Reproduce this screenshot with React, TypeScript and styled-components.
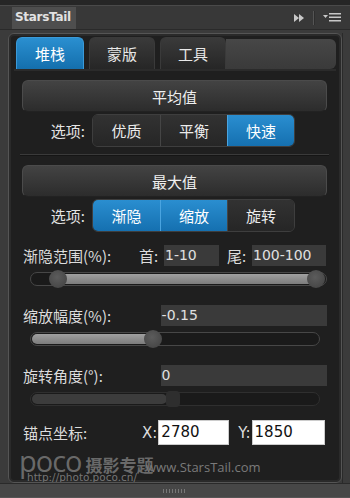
import * as React from 'react';
import styled, { createGlobalStyle, css } from 'styled-components';

const GlobalStyle = createGlobalStyle`
  html, body {
    margin: 0;
    padding: 0;
    background: #3a3a3a;
  }
  * {
    box-sizing: border-box;
  }
`;

const CJK = `"Noto Sans CJK SC", "Noto Sans", sans-serif`;

export default function App() {
  return (
    <Window>
      <GlobalStyle />
      <TopStrip />
      <Header>
        <PanelTitle>StarsTail</PanelTitle>
        <HeaderTools>
          <svg width="11" height="8" viewBox="0 0 11 8">
            <path d="M0 0 L5 4 L0 8 Z M5 0 L10 4 L5 8 Z" fill="#c8c8c8" />
          </svg>
          <HeaderDivider />
          <svg width="18" height="9" viewBox="0 0 18 9">
            <path d="M0 2 L5 2 L2.5 5 Z" fill="#c8c8c8" />
            <rect x="6" y="0" width="12" height="1.5" fill="#c8c8c8" />
            <rect x="6" y="3.5" width="12" height="1.5" fill="#c8c8c8" />
            <rect x="6" y="7" width="12" height="1.5" fill="#c8c8c8" />
          </svg>
        </HeaderTools>
      </Header>
      <Body>
        <Panel>
          <TabBar>
            <Tab $active>堆栈</Tab>
            <Tab>蒙版</Tab>
            <Tab>工具</Tab>
            <TabFiller />
          </TabBar>
          <Content>
            <SectionButton>平均值</SectionButton>
            <OptionRow>
              <OptionLabel>选项:</OptionLabel>
              <Segmented>
                <Segment>优质</Segment>
                <Segment>平衡</Segment>
                <Segment $active>快速</Segment>
              </Segmented>
            </OptionRow>
            <Separator />
            <SectionButton>最大值</SectionButton>
            <OptionRow>
              <OptionLabel>选项:</OptionLabel>
              <Segmented>
                <Segment $active>渐隐</Segment>
                <Segment $active>缩放</Segment>
                <Segment>旋转</Segment>
              </Segmented>
            </OptionRow>

            <FieldRow $top={12}>
              <FieldLabel>渐隐范围(%):</FieldLabel>
              <SubLabel $left={6}>首:</SubLabel>
              <ValueBox $w={55}>1-10</ValueBox>
              <SubLabel $left={8}>尾:</SubLabel>
              <ValueBox $w={74}>100-100</ValueBox>
            </FieldRow>
            <Track $right={0}>
              <Fill style={{ left: 26, width: 260 }} />
              <Knob style={{ left: 18 }} />
              <Knob style={{ left: 276 }} />
            </Track>

            <FieldRow $top={18}>
              <FieldLabel>缩放幅度(%):</FieldLabel>
              <ValueBox $w={167} $left={28}>-0.15</ValueBox>
            </FieldRow>
            <Track $right={7}>
              <Fill style={{ left: 1, width: 121 }} />
              <Knob style={{ left: 113 }} />
            </Track>

            <FieldRow $top={18}>
              <FieldLabel>旋转角度(°):</FieldLabel>
              <ValueBox $w={167} $left={28}>0</ValueBox>
            </FieldRow>
            <Track $right={7} $dim>
              <Fill $dim style={{ left: 1, width: 135 }} />
              <FlatKnob style={{ left: 135 }} />
            </Track>

            <AnchorRow>
              <FieldLabel>锚点坐标:</FieldLabel>
              <AxisLabel $left={9}>X:</AxisLabel>
              <CoordInput>2780</CoordInput>
              <AxisLabel $left={9}>Y:</AxisLabel>
              <CoordInput $w={73}>1850</CoordInput>
            </AnchorRow>
          </Content>
          <Watermark>
            <PocoLine>
              <Poco>poco</Poco>
              <PocoCn>摄影专题</PocoCn>
            </PocoLine>
            <PocoUrl>http://photo.poco.cn/</PocoUrl>
          </Watermark>
          <SiteMark>www.StarsTail.com</SiteMark>
        </Panel>
        <SideRail />
      </Body>
      <Footer>
        <Grip />
      </Footer>
    </Window>
  );
}

const Window = styled.div`
  width: 350px;
  height: 498px;
  background: #3b3b3b;
  display: flex;
  flex-direction: column;
  overflow: hidden;
  font-family: ${CJK};
`;

const TopStrip = styled.div`
  height: 6px;
  background: #262626;
  border-bottom: 1px solid #4a4a4a;
`;

const Header = styled.div`
  height: 24px;
  display: flex;
  align-items: flex-end;
  padding-left: 12px;
  background: #383838;
  border-bottom: 1px solid #2a2a2a;
`;

const PanelTitle = styled.div`
  height: 22px;
  padding: 0 3px;
  width: 64px;
  background: #4e4e4e;
  color: #e2e2e2;
  font-family: "DejaVu Sans", "Liberation Sans", sans-serif;
  font-weight: bold;
  font-size: 12px;
  line-height: 21px;
  letter-spacing: -0.3px;
`;

const HeaderTools = styled.div`
  margin-left: auto;
  align-self: center;
  display: flex;
  align-items: center;
  gap: 5px;
  padding-right: 9px;
`;

const HeaderDivider = styled.div`
  width: 2px;
  height: 14px;
  margin: 0 3px;
  background: #555;
  border-right: 1px solid #2e2e2e;
`;

const Body = styled.div`
  flex: 1;
  display: flex;
  padding: 3px 0 0 8px;
`;

const Panel = styled.div`
  position: relative;
  width: 334px;
  height: 450px;
  background: #1f1f1f;
  border: 1px solid #555;
  border-radius: 6px;
  box-shadow: inset 0 0 0 2px #2a2a2a;
  overflow: hidden;
`;

const SideRail = styled.div`
  width: 8px;
  border-left: 1px solid #2a2a2a;
  background: #3b3b3b;
`;

const TabBar = styled.div`
  display: flex;
  align-items: flex-end;
  gap: 5px;
  margin: 3px 5px 0 5px;
  height: 34px;
  padding: 0 0 0 2px;
  border-bottom: 2px solid #2b2b2b;
`;

const Tab = styled.div<{ $active?: boolean }>`
  width: ${(p) => (p.$active ? 68 : 66)}px;
  height: 32px;
  border-radius: 6px 6px 0 0;
  display: flex;
  align-items: center;
  justify-content: center;
  font-size: 15px;
  color: #e8e8e8;
  border: 1px solid #3a3a3a;
  border-bottom: none;
  background: linear-gradient(#3a3a3a, #262626);
  ${(p) =>
    p.$active &&
    css`
      color: #fff;
      border-color: #3b9ad8;
      background: linear-gradient(#2a8fd0, #146fad);
    `}
`;

const TabFiller = styled.div`
  flex: 1;
  height: 30px;
  align-self: flex-start;
  margin-top: 2px;
  margin-left: -5px;
  border-radius: 0 6px 6px 0;
  background: linear-gradient(#474747, #3a3a3a);
`;

const Content = styled.div`
  padding: 9px 14px 0 13px;
  display: flex;
  flex-direction: column;
`;

const SectionButton = styled.div`
  height: 32px;
  border-radius: 6px;
  background: linear-gradient(#434343, #2c2c2c);
  border: 1px solid #4b4b4b;
  border-bottom-color: #222;
  display: flex;
  align-items: center;
  justify-content: center;
  color: #f0f0f0;
  font-size: 15px;
`;

const OptionRow = styled.div`
  display: flex;
  align-items: center;
  margin-top: 2px;
  height: 33px;
`;

const OptionLabel = styled.div`
  width: 70px;
  text-align: right;
  padding-right: 7px;
  color: #e4e4e4;
  font-size: 15px;
`;

const Segmented = styled.div`
  display: flex;
  height: 33px;
  border-radius: 6px;
  overflow: hidden;
  border: 1px solid #3e3e3e;
`;

const Segment = styled.div<{ $active?: boolean }>`
  width: 67px;
  display: flex;
  align-items: center;
  justify-content: center;
  font-size: 15px;
  color: #ececec;
  background: linear-gradient(#323232, #262626);
  border-left: 1px solid #454545;
  &:first-child {
    border-left: none;
  }
  ${(p) =>
    p.$active &&
    css`
      color: #fff;
      background: linear-gradient(#2a8ed0, #1570b0);
      border-left-color: #4aa4e0;
    `}
`;

const Separator = styled.div`
  margin: 7px -2px 9px;
  height: 2px;
  background: #3a3a3a;
  border-bottom: 1px solid #151515;
`;

const FieldRow = styled.div<{ $top: number }>`
  display: flex;
  align-items: center;
  margin-top: ${(p) => p.$top}px;
  height: 22px;
`;

const FieldLabel = styled.div`
  width: 111px;
  padding-left: 1px;
  color: #dcdcdc;
  font-size: 15px;
  white-space: nowrap;
`;

const SubLabel = styled.div<{ $left: number }>`
  margin-left: ${(p) => p.$left}px;
  width: 25px;
  color: #dcdcdc;
  font-size: 15px;
`;

const ValueBox = styled.div<{ $w: number; $left?: number }>`
  width: ${(p) => p.$w}px;
  margin-left: ${(p) => p.$left ?? 0}px;
  height: 21px;
  background: #3a3a3a;
  color: #e0e0e0;
  font-family: "DejaVu Sans", "Liberation Sans", sans-serif;
  font-size: 14px;
  line-height: 21px;
  padding-left: 1px;
`;

const Track = styled.div<{ $right: number; $dim?: boolean }>`
  position: relative;
  margin: 6px ${(p) => p.$right}px 0 8px;
  height: 14px;
  border-radius: 7px;
  background: #1a1a1a;
  border: 1px solid ${(p) => (p.$dim ? '#2f2f2f' : '#474747')};
`;

const Fill = styled.div<{ $dim?: boolean }>`
  position: absolute;
  top: 1px;
  bottom: 1px;
  border-radius: 6px;
  background: ${(p) =>
    p.$dim ? '#3c3c3c' : 'linear-gradient(#a0a0a0, #7c7c7c)'};
`;

const Knob = styled.div`
  position: absolute;
  top: -3px;
  width: 18px;
  height: 18px;
  border-radius: 50%;
  background: radial-gradient(circle at 45% 40%, #5c5c5c, #404040);
`;

const FlatKnob = styled.div`
  position: absolute;
  top: -2px;
  width: 14px;
  height: 16px;
  border-radius: 4px;
  background: #2e2e2e;
`;

const AnchorRow = styled.div`
  display: flex;
  align-items: center;
  margin-top: 14px;
  height: 25px;
`;

const AxisLabel = styled.div<{ $left: number }>`
  margin-left: ${(p) => p.$left}px;
  color: #dcdcdc;
  font-family: "DejaVu Sans", "Liberation Sans", sans-serif;
  font-size: 15px;
  padding-right: 1px;
`;

const CoordInput = styled.div<{ $w?: number }>`
  width: ${(p) => p.$w ?? 71}px;
  height: 25px;
  background: #fff;
  border: 1px solid #ccc;
  color: #111;
  font-family: "DejaVu Sans", "Liberation Sans", sans-serif;
  font-size: 15px;
  line-height: 23px;
  padding-left: 2px;
`;

const Watermark = styled.div`
  position: absolute;
  left: 10px;
  top: 417px;
  color: rgba(140, 140, 140, 0.7);
  pointer-events: none;
`;

const PocoLine = styled.div`
  display: flex;
  align-items: baseline;
  gap: 4px;
  height: 20px;
`;

const Poco = styled.span`
  font-family: "Open Sans", "DejaVu Sans", sans-serif;
  font-size: 29px;
  line-height: 20px;
  letter-spacing: -1px;
`;

const PocoCn = styled.span`
  font-family: ${CJK};
  font-weight: bold;
  font-size: 17px;
  line-height: 20px;
`;

const PocoUrl = styled.div`
  margin: 0 0 0 8px;
  font-family: "DejaVu Sans", "Liberation Sans", sans-serif;
  font-size: 10.5px;
  line-height: 13px;
  color: rgba(140, 140, 140, 0.8);
`;

const SiteMark = styled.div`
  position: absolute;
  left: 137px;
  top: 424px;
  color: #7a7a7a;
  font-family: "Open Sans", "DejaVu Sans", sans-serif;
  font-size: 13px;
`;

const Footer = styled.div`
  height: 15px;
  display: flex;
  align-items: center;
  justify-content: center;
  background: #474747;
  border-top: 1px solid #2a2a2a;
  border-bottom: 1px solid #555;
`;

const Grip = styled.div`
  width: 24px;
  height: 4px;
  background: repeating-linear-gradient(90deg, #777 0 1px, transparent 1px 3px);
`;
